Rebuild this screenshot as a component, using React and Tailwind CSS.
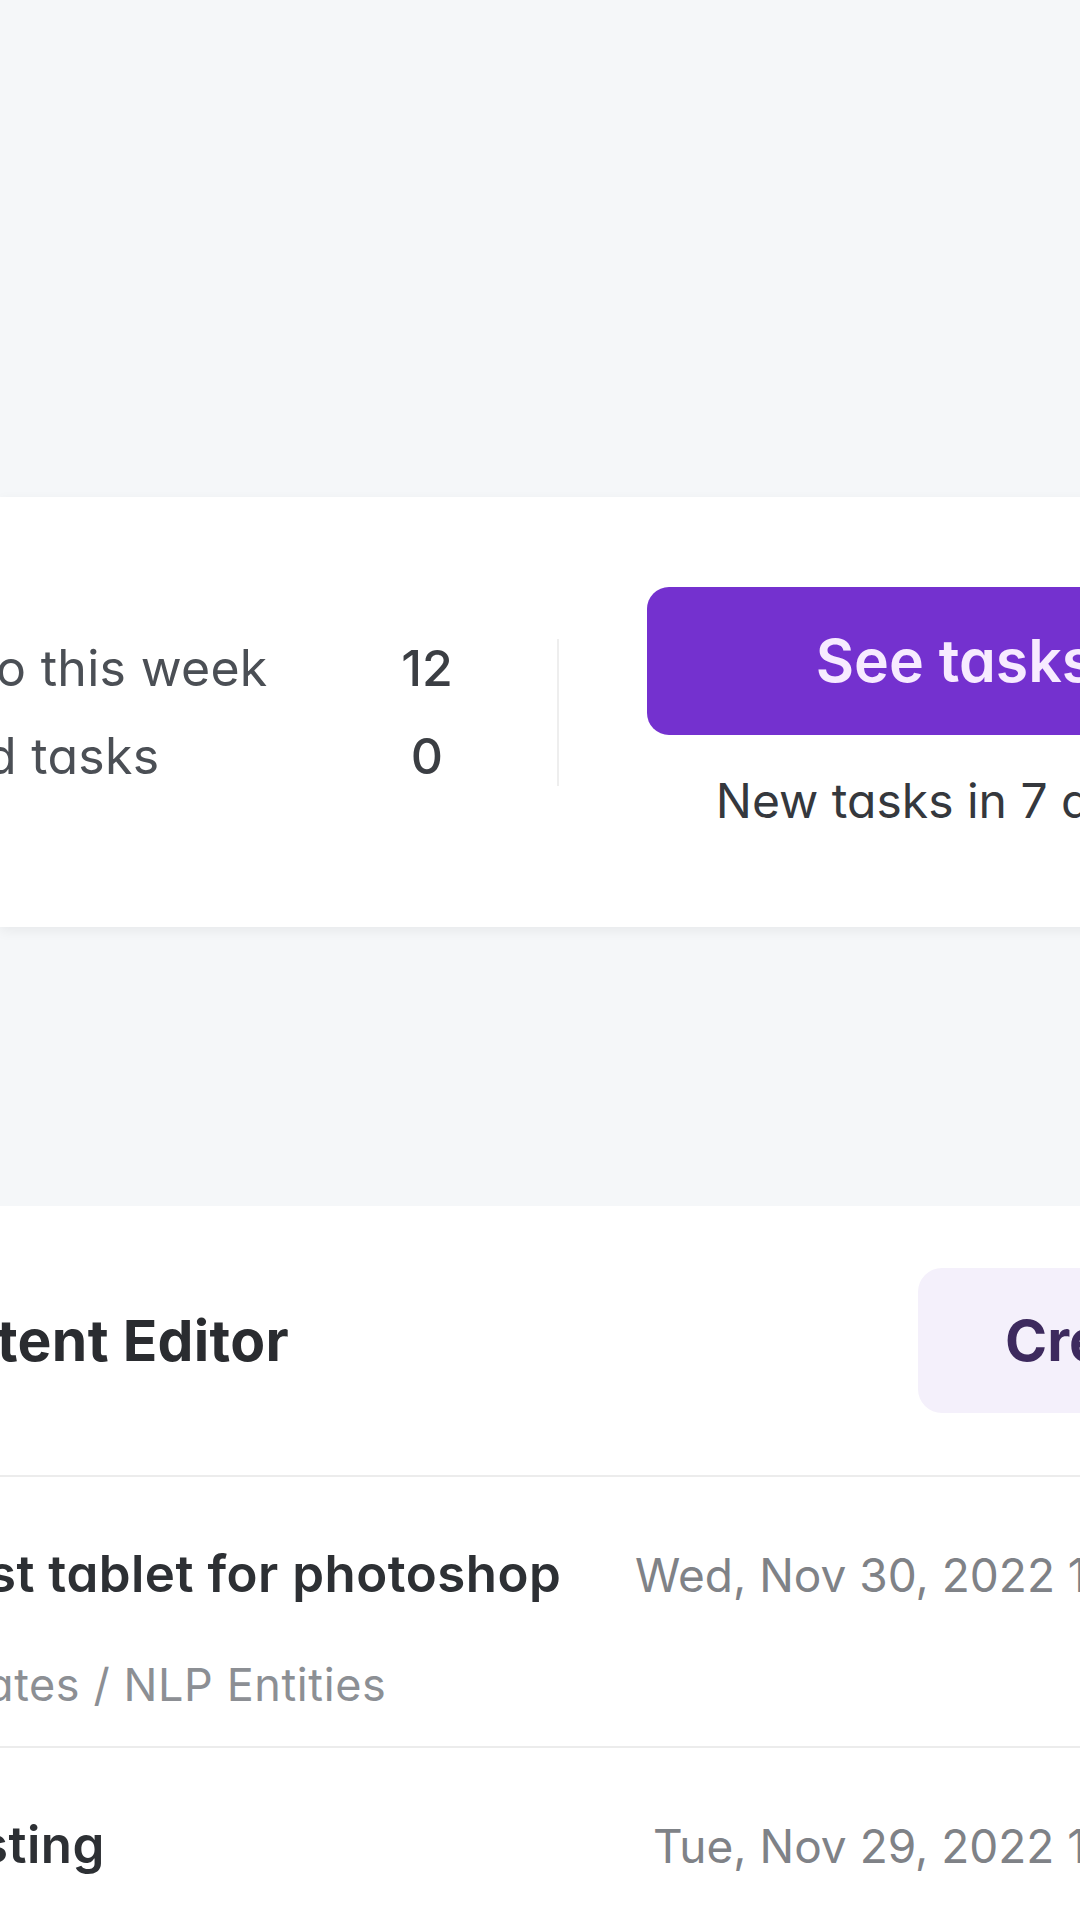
import React from "react";

function StatRow({ label, value, shift }) {
  return (
    <div className="flex h-[88px] items-center">
      <div className="w-[380px] overflow-hidden">
        <span className={`block whitespace-nowrap text-[50px] tracking-[0.3px] leading-[88px] text-[#4b4f55] ${shift}`}>{label}</span>
      </div>
      <span className="w-[94px] text-center text-[50px] font-medium leading-[88px] text-[#3b3e43]">{value}</span>
    </div>
  );
}

function TaskRow({ title, titleShift, date, dateLeft, sub, subShift }) {
  return (
    <div className="border-b-2 border-[#ececec] pt-[67px] pb-[35px]">
      <div className="flex items-baseline">
        <div className={`${dateLeft} shrink-0 overflow-hidden`}>
          <span className={`block whitespace-nowrap text-[51px] font-semibold tracking-[0.5px] leading-[60px] text-[#2d3034] ${titleShift}`}>{title}</span>
        </div>
        <span className="whitespace-nowrap text-[46px] leading-[60px] text-[#7f8287]">{date}</span>
      </div>
      <div className="mt-[53px] overflow-hidden">
        <span className={`block whitespace-nowrap text-[45px] tracking-[0.6px] leading-[53px] text-[#8c8f94] ${subShift}`}>{sub}</span>
      </div>
    </div>
  );
}

export default function App() {
  return (
    <div className="w-[1080px] h-[1920px] overflow-hidden bg-[#f5f7f9] font-['Inter',sans-serif] [font-feature-settings:'cv11']">
      <div className="h-[497px]" />

      <section className="flex h-[430px] w-[1600px] items-center bg-white shadow-[0_4px_12px_rgba(0,0,0,0.06)]">
        <div className="flex flex-col">
          <StatRow label="o this week" value="12" shift="-ml-[4px]" />
          <StatRow label="d tasks" value="0" shift="-ml-[14px]" />
        </div>
        <div className="ml-[83px] h-[147px] w-[2px] bg-[#eeeeee]" />
        <div className="ml-[88px] flex w-[594px] shrink-0 flex-col items-center">
          <button className="h-[148px] w-full rounded-[22px] bg-[#7431cf] pl-[22px] text-[59px] font-semibold text-[#f7ebff]">
            See tasks
          </button>
          <p className="mt-[30px] whitespace-nowrap text-[48px] leading-[72px] text-[#35383d]">New tasks in 7 days</p>
        </div>
      </section>

      <div className="h-[279px]" />

      <section className="w-[1600px] bg-white">
        <div className="flex items-center border-b-2 border-[#ececec] py-[62px]">
          <div className="w-[918px] shrink-0 overflow-hidden">
            <h2 className="-ml-[3px] whitespace-nowrap text-[57px] font-bold tracking-[0.3px] text-[#2a2c30]">tent Editor</h2>
          </div>
          <button className="h-[145px] shrink-0 whitespace-nowrap rounded-[24px] bg-[#f4f0fb] px-[87px] text-[57px] font-bold text-[#3d2a5e]">
            Create new
          </button>
        </div>
        <TaskRow
          title="st tablet for photoshop"
          titleShift="-ml-[12px]"
          date="Wed, Nov 30, 2022 10:42 AM"
          dateLeft="w-[635px]"
          sub="ates / NLP Entities"
          subShift="-ml-[14px]"
        />
        <TaskRow
          title="sting"
          titleShift="-ml-[20px]"
          date="Tue, Nov 29, 2022 11:15 AM"
          dateLeft="w-[653px]"
          sub="ates / Content Brief"
          subShift="-ml-[14px]"
        />
      </section>
    </div>
  );
}
